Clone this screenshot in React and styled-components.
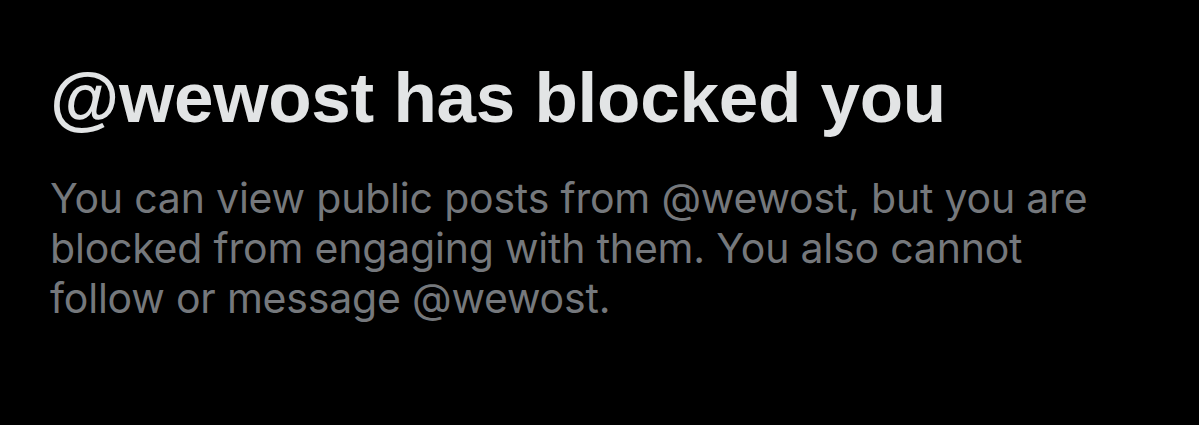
import React from "react";
import styled, { createGlobalStyle } from "styled-components";

const GlobalStyle = createGlobalStyle`
  html, body {
    margin: 0;
    padding: 0;
    background: #000;
  }
`;

const Main = styled.main`
  width: 1199px;
  height: 425px;
  box-sizing: border-box;
  padding: 56px 50px 0;
  background: #000;
  display: flex;
  flex-direction: column;
  gap: 33px;
`;

const Title = styled.h1`
  margin: 0;
  font-family: "Liberation Sans", Arial, sans-serif;
  font-weight: 700;
  font-size: 71px;
  line-height: 84px;
  letter-spacing: -0.25px;
  color: #e2e4e5;
`;

const Body = styled.p`
  margin: 0;
  font-family: "Inter", "Liberation Sans", sans-serif;
  font-weight: 400;
  font-size: 41px;
  line-height: 50px;
  letter-spacing: -0.2px;
  color: #75787c;
`;

const App = () => {
  const handle = "@wewost";
  return (
    <Main>
      <GlobalStyle />
      <Title>{handle} has blocked you</Title>
      <Body>
        You can view public posts from {handle}, but you are
        <br />
        blocked from engaging with them. You also cannot
        <br />
        follow or message {handle}.
      </Body>
    </Main>
  );
};

export default App;
